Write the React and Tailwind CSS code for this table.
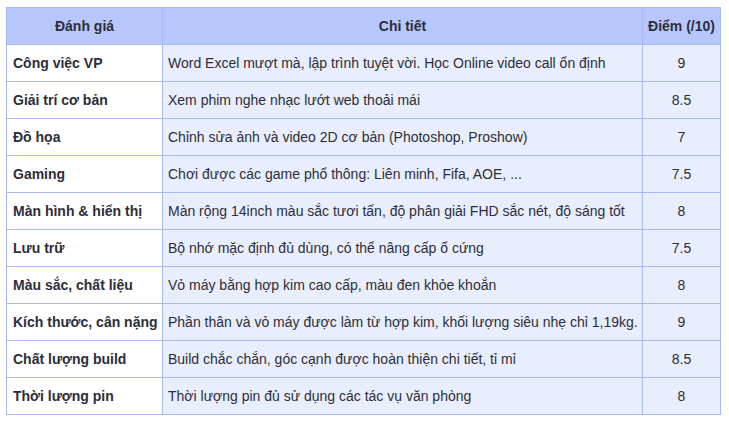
const ROWS = [
  ["Công việc VP", "Word Excel mượt mà, lập trình tuyệt vời. Học Online video call ổn định", "9"],
  ["Giải trí cơ bản", "Xem phim nghe nhạc lướt web thoải mái", "8.5"],
  ["Đồ họa", "Chỉnh sửa ảnh và video 2D cơ bản (Photoshop, Proshow)", "7"],
  ["Gaming", "Chơi được các game phổ thông: Liên minh, Fifa, AOE, ...", "7.5"],
  ["Màn hình & hiển thị", "Màn rộng 14inch màu sắc tươi tấn, độ phân giải FHD sắc nét, độ sáng tốt", "8"],
  ["Lưu trữ", "Bộ nhớ mặc định đủ dùng, có thể nâng cấp ổ cứng", "7.5"],
  ["Màu sắc, chất liệu", "Vỏ máy bằng hợp kim cao cấp, màu đen khỏe khoắn", "8"],
  ["Kích thước, cân nặng", "Phần thân và vỏ máy được làm từ hợp kim, khối lượng siêu nhẹ chỉ 1,19kg.", "9"],
  ["Chất lượng build", "Build chắc chắn, góc cạnh được hoàn thiện chi tiết, tỉ mỉ", "8.5"],
  ["Thời lượng pin", "Thời lượng pin đủ sử dụng các tác vụ văn phòng", "8"],
];

export default function App() {
  return (
    <div className="bg-white w-[729px] h-[425px] pl-[6px] pt-[7px] font-['Liberation_Sans',Arial,sans-serif] text-[14px] text-[#2d2d3a]">
      <table className="w-[715px] border-collapse">
        <thead>
          <tr className="h-[37px] bg-[#b7c7fb]">
            <th className="w-[156px] border border-[#a9b9f7] font-bold text-center">Đánh giá</th>
            <th className="w-[480px] border border-[#a9b9f7] font-bold text-center">Chi tiết</th>
            <th className="border border-[#a9b9f7] font-bold text-center">Điểm (/10)</th>
          </tr>
        </thead>
        <tbody>
          {ROWS.map(([name, detail, score]) => (
            <tr key={name} className="h-[37px]">
              <td className="border border-[#a9b9f7] bg-white font-bold pl-[6px] whitespace-nowrap">{name}</td>
              <td className="border border-[#a9b9f7] bg-[#e8eefd] pl-[5px] whitespace-nowrap">{detail}</td>
              <td className="border border-[#a9b9f7] bg-[#e8eefd] text-center">{score}</td>
            </tr>
          ))}
        </tbody>
      </table>
    </div>
  );
}
